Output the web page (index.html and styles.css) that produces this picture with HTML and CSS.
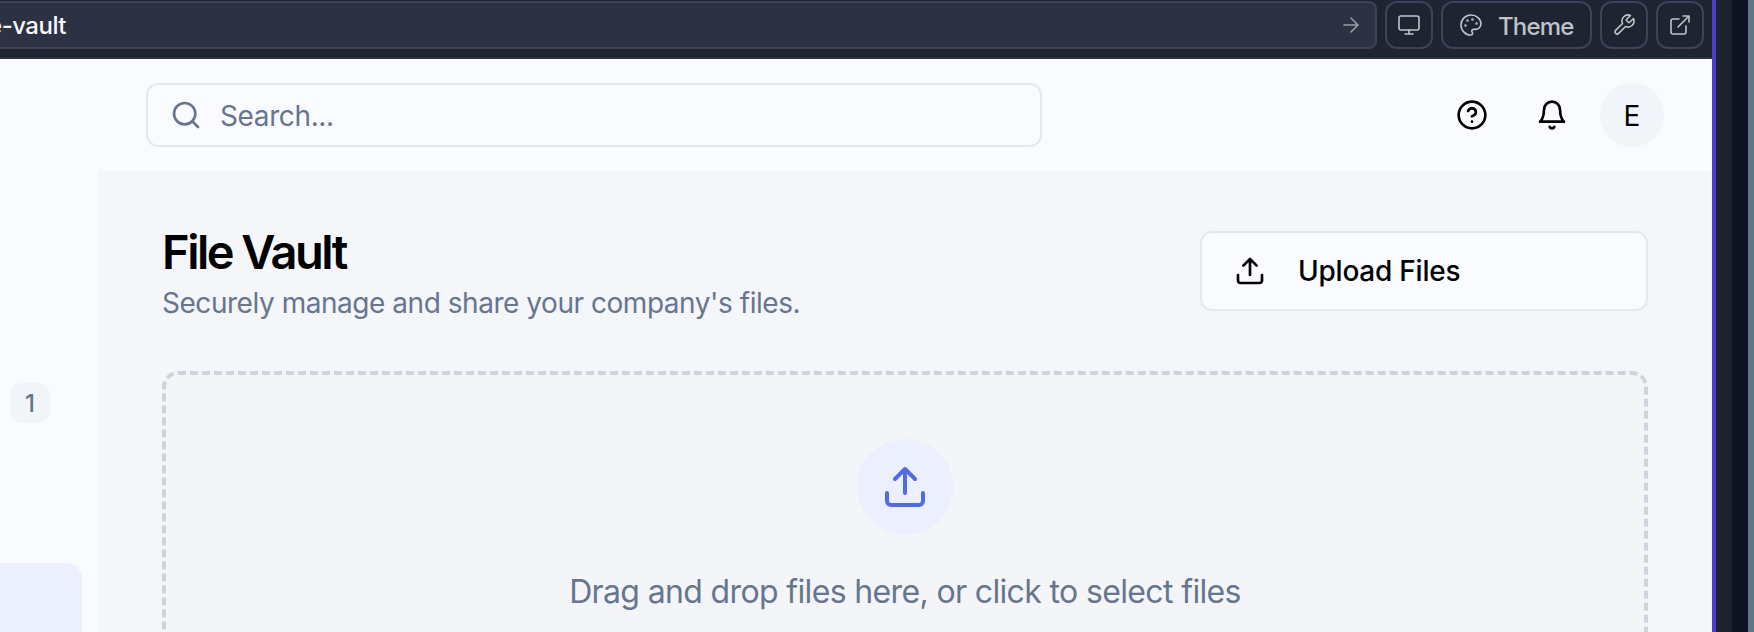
FILE: index.html
```html
<!DOCTYPE html>
<html lang="en">
<head>
<meta charset="utf-8">
<title>File Vault</title>
<link rel="stylesheet" href="styles.css">
</head>
<body>
<div class="desktop">
  <div class="window">
    <div class="toolbar">
      <div class="url"><span class="url-text">e-vault</span>
        <svg class="tool-icon dim" viewBox="0 0 24 24"><path d="M5 12h14M12 5l7 7-7 7"/></svg>
      </div>
      <button class="tool"><svg class="tool-icon" viewBox="0 0 24 24"><rect x="2" y="3" width="20" height="14" rx="2"/><path d="M8 21h8M12 17v4"/></svg></button>
      <button class="tool theme"><svg class="tool-icon" viewBox="0 0 24 24"><circle cx="13.5" cy="6.5" r=".5"/><circle cx="17.5" cy="10.5" r=".5"/><circle cx="8.5" cy="7.5" r=".5"/><circle cx="6.5" cy="12.5" r=".5"/><path d="M12 2C6.5 2 2 6.5 2 12s4.5 10 10 10c.926 0 1.648-.746 1.648-1.688 0-.437-.18-.835-.437-1.125-.29-.289-.438-.652-.438-1.125a1.64 1.64 0 0 1 1.668-1.668h1.996c3.051 0 5.555-2.503 5.555-5.554C21.965 6.012 17.461 2 12 2z"/></svg><span class="theme-label">Theme</span></button>
      <button class="tool"><svg class="tool-icon" viewBox="0 0 24 24"><path d="M14.7 6.3a1 1 0 0 0 0 1.4l1.6 1.6a1 1 0 0 0 1.4 0l3.77-3.77a6 6 0 0 1-7.94 7.94l-6.91 6.91a2.12 2.12 0 0 1-3-3l6.91-6.91a6 6 0 0 1 7.94-7.94l-3.76 3.76z"/></svg></button>
      <button class="tool"><svg class="tool-icon" viewBox="0 0 24 24"><path d="M15 3h6v6M10 14 21 3M18 13v6a2 2 0 0 1-2 2H5a2 2 0 0 1-2-2V8a2 2 0 0 1 2-2h6"/></svg></button>
    </div>
    <div class="app">
      <aside class="sidebar">
        <span class="badge">1</span>
        <div class="nav-active"></div>
      </aside>
      <div class="content">
        <header class="header">
          <div class="search"><svg class="icon" viewBox="0 0 24 24"><circle cx="11" cy="11" r="8"/><path d="m21 21-4.3-4.3"/></svg><span>Search...</span></div>
          <div class="actions">
            <button class="icon-button"><svg class="icon" viewBox="0 0 24 24"><circle cx="12" cy="12" r="10"/><path d="M9.09 9a3 3 0 0 1 5.83 1c0 2-3 3-3 3M12 17h.01"/></svg></button>
            <button class="icon-button"><svg class="icon" viewBox="0 0 24 24"><path d="M6 8a6 6 0 0 1 12 0c0 7 3 9 3 9H3s3-2 3-9M10.3 21a1.94 1.94 0 0 0 3.4 0"/></svg></button>
            <div class="avatar">E</div>
          </div>
        </header>
        <main class="main">
          <div class="page-head">
            <div class="titles">
              <h1 class="title">File Vault</h1>
              <p class="subtitle">Securely manage and share your company's files.</p>
            </div>
            <button class="upload"><svg class="icon" viewBox="0 0 24 24"><path d="M21 15v4a2 2 0 0 1-2 2H5a2 2 0 0 1-2-2v-4M17 8l-5-5-5 5M12 3v12"/></svg><span>Upload Files</span></button>
          </div>
          <div class="dropzone">
            <div class="drop-circle"><svg class="icon large" viewBox="0 0 24 24"><path d="M21 15v4a2 2 0 0 1-2 2H5a2 2 0 0 1-2-2v-4M17 8l-5-5-5 5M12 3v12"/></svg></div>
            <p class="drop-text">Drag and drop files here, or click to select files</p>
          </div>
        </main>
      </div>
    </div>
  </div>
  <div class="frame-inner"></div>
  <div class="frame-outer"></div>
  <div class="wallpaper"></div>
</div>
</body>
</html>
```
FILE: styles.css
```css
* { box-sizing: border-box; margin: 0; }
body { font-family: Inter, "Liberation Sans", sans-serif; overflow: hidden; }
button { font: inherit; color: inherit; padding: 0; border: 0; background: none; }
svg { display: block; fill: none; stroke: currentColor; stroke-width: 2; stroke-linecap: round; stroke-linejoin: round; flex: none; }

.desktop { display: flex; width: 1754px; height: 632px; overflow: hidden; }
.window { width: 1716px; border-right: 4px solid #4f3cc9; display: flex; flex-direction: column; }
.frame-inner { width: 16px; background: #1d2430; }
.frame-outer { width: 16px; background: #0e1423; }
.wallpaper { width: 6px; background: #5c7886; }

.toolbar { height: 59px; flex: none; display: flex; align-items: flex-start; gap: 8px; padding: 1px 8px 0 0; background: #1f2433; border-bottom: 2px solid #2d3144; }
.url { flex: 1; height: 48px; display: flex; align-items: center; justify-content: space-between; padding-right: 12px; background: #2d3144; border: 2px solid #3e425a; border-left: 0; border-radius: 0 8px 8px 0; color: #f8fafc; }
.url-text { width: 66px; display: flex; justify-content: flex-end; white-space: nowrap; font-weight: 500; font-size: 24px; letter-spacing: -0.5px; padding-top: 1px; }
.tool { width: 48px; height: 48px; display: flex; align-items: center; justify-content: center; border: 2px solid #3e425a; border-radius: 12px; color: #bfc3c8; }
.theme { width: 151px; justify-content: flex-start; padding-left: 16px; gap: 15px; font-size: 24px; font-weight: 500; }
.theme-label { letter-spacing: -0.8px; padding-top: 2px; }
.tool-icon { width: 24px; height: 24px; stroke-width: 1.6; }
.dim { color: #9a9da8; }

.app { flex: 1; display: flex; background: #f9fbff; }
.sidebar { width: 98px; padding-top: 324px; }
.badge { display: flex; width: 40px; height: 40px; margin-left: 10px; align-items: center; justify-content: center; border-radius: 12px; background: #f1f5f9; color: #64748b; font-size: 24px; font-weight: 500; padding-top: 1px; }
.nav-active { width: 82px; height: 80px; margin-top: 140px; border-radius: 0 16px 0 0; background: #ebeffe; }
.content { flex: 1; display: flex; flex-direction: column; }
.header { height: 112px; padding: 0 48px; display: flex; align-items: center; justify-content: space-between; }
.search { width: 896px; height: 64px; display: flex; align-items: center; gap: 18px; padding-left: 22px; border: 2px solid #e2e8f0; border-radius: 12px; background: #fafbff; color: #67758f; font-size: 28px; letter-spacing: -0.38px; }
.search span { padding-top: 2px; }
.actions { display: flex; gap: 16px; }
.icon-button { width: 64px; height: 64px; display: flex; align-items: center; justify-content: center; color: #000; }
.icon { width: 32px; height: 32px; }
.large { width: 48px; height: 48px; }
.avatar { width: 64px; height: 64px; display: flex; align-items: center; justify-content: center; border-radius: 50%; background: #f1f5f9; font-size: 28px; padding-top: 1px; }

.main { flex: 1; padding: 48px 64px 0; background: #f4f6fa; }
.page-head { display: flex; align-items: center; justify-content: space-between; height: 104px; margin-bottom: 48px; }
.title { font-size: 47px; line-height: 64px; font-weight: 600; letter-spacing: -2.5px; padding-top: 1px; }
.subtitle { color: #67758f; font-size: 28px; line-height: 38px; letter-spacing: -0.46px; padding-bottom: 1px; }
.upload { width: 448px; height: 80px; display: flex; align-items: center; gap: 32px; padding-left: 32px; border: 2px solid #e2e8f0; border-radius: 12px; background: #fafbff; font-size: 28px; font-weight: 500; letter-spacing: -0.23px; }
.dropzone { height: 400px; display: flex; flex-direction: column; align-items: center; padding-top: 64px; border: 4px dashed #ced4dd; border-radius: 16px; background: #f3f5f9; }
.drop-circle { width: 96px; height: 96px; display: flex; align-items: center; justify-content: center; margin-bottom: 33px; border-radius: 50%; background: #ebeffe; color: #526be5; }
.drop-text { color: #67758f; font-size: 32px; line-height: 48px; letter-spacing: -0.64px; }
```
